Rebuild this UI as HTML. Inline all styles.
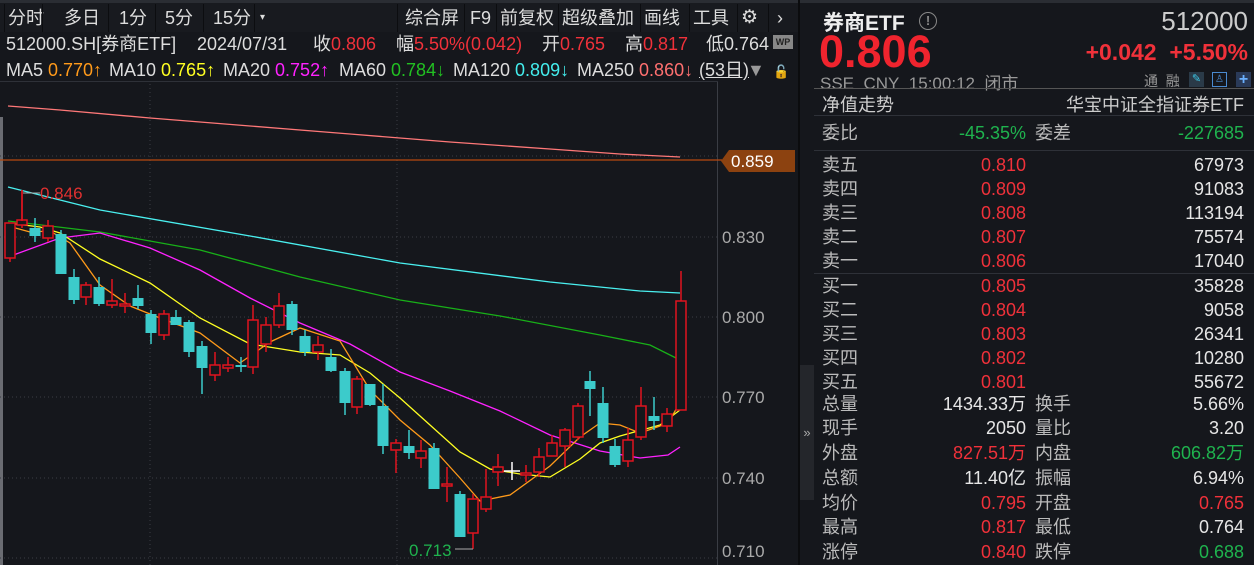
<!DOCTYPE html>
<html><head><meta charset="utf-8"><style>
*{margin:0;padding:0;box-sizing:border-box}
body{width:1254px;height:565px;background:#15171c;overflow:hidden;font-family:"Liberation Sans","Noto Sans CJK SC",sans-serif;color:#ccc;position:relative}
.a{position:absolute;white-space:nowrap}
.tb{position:absolute;top:4px;height:28px;font-size:18px;color:#ddd;line-height:28px}
.r{color:#f0313a}.g{color:#1fb34e}.w{color:#e6e6e6}
.row{position:absolute;left:822px;width:422px;height:24px;font-size:18px;line-height:24px}
.row span{position:absolute}
.l1{left:0;color:#bbb}.v1{right:218px}.l2{left:213px;color:#bbb}.v2{right:0}
.il{position:absolute;top:32px;font-size:18px;line-height:24px;color:#ddd;white-space:nowrap}
.ml{position:absolute;top:58px;font-size:18px;line-height:24px;color:#ddd;white-space:nowrap}
</style></head><body>
<div class="a" style="left:0;top:0;width:1254px;height:3px;background:#2a2d33"></div>
<div class="a" style="left:0;top:3px;width:798px;height:29px;background:#181a1f"></div>
<div class="tb" style="left:8px">分时</div>
<div class="tb" style="left:64px">多日</div>
<div class="tb" style="left:119px">1分</div>
<div class="tb" style="left:165px">5分</div>
<div class="tb" style="left:213px">15分</div>
<div class="tb" style="left:260px;font-size:10px">▾</div>
<div class="tb" style="left:405px">综合屏</div>
<div class="tb" style="left:470px">F9</div>
<div class="tb" style="left:500px">前复权</div>
<div class="tb" style="left:562px">超级叠加</div>
<div class="tb" style="left:644px">画线</div>
<div class="tb" style="left:693px">工具</div>
<div class="tb" style="left:741px;font-size:19px">⚙</div>
<div class="tb" style="left:777px">›</div>
<svg class="a" style="left:0;top:0" width="800" height="32">
<g stroke="#0c0d10" stroke-width="1">
<line x1="4.5" y1="4" x2="4.5" y2="32"/><line x1="42.5" y1="4" x2="42.5" y2="32"/><line x1="108.5" y1="4" x2="108.5" y2="32"/><line x1="155.5" y1="4" x2="155.5" y2="32"/><line x1="203.5" y1="4" x2="203.5" y2="32"/><line x1="254.5" y1="4" x2="254.5" y2="32"/>
<line x1="397.5" y1="4" x2="397.5" y2="32"/><line x1="464.5" y1="4" x2="464.5" y2="32"/><line x1="496.5" y1="4" x2="496.5" y2="32"/><line x1="558.5" y1="4" x2="558.5" y2="32"/><line x1="640.5" y1="4" x2="640.5" y2="32"/><line x1="689.5" y1="4" x2="689.5" y2="32"/><line x1="737.5" y1="4" x2="737.5" y2="32"/><line x1="768.5" y1="4" x2="768.5" y2="32"/></g></svg>
<span class="il" style="left:6px">512000.SH[券商ETF]</span>
<span class="il" style="left:197px">2024/07/31</span>
<span class="il" style="left:313px">收<span class="r">0.806</span></span>
<span class="il" style="left:396px">幅<span class="r">5.50%(0.042)</span></span>
<span class="il" style="left:542px">开<span class="r">0.765</span></span>
<span class="il" style="left:625px">高<span class="r">0.817</span></span>
<span class="il" style="left:706px">低0.764</span>
<div class="a" style="left:773px;top:35px;width:20px;height:14px;background:#888;color:#222;font-size:9px;font-weight:bold;text-align:center;line-height:14px">WP</div>
<span class="ml" style="left:6px">MA5 <span style="color:#ff9a1a">0.770↑</span></span>
<span class="ml" style="left:109px">MA10 <span style="color:#ffff22">0.765↑</span></span>
<span class="ml" style="left:223px">MA20 <span style="color:#ff22ff">0.752↑</span></span>
<span class="ml" style="left:339px">MA60 <span style="color:#22c022">0.784↓</span></span>
<span class="ml" style="left:453px">MA120 <span style="color:#44eeee">0.809↓</span></span>
<span class="ml" style="left:577px">MA250 <span style="color:#ff7070">0.860↓</span></span>
<span class="ml" style="left:699px;text-decoration:underline">(53日)</span>
<span class="ml" style="left:747px;color:#999">▼</span>
<span class="ml" style="left:773px;color:#e0a020;font-size:13px;top:60px">🔓</span>
<svg class="a" style="left:0;top:80px" width="800" height="485" viewBox="0 80 800 485">
<line x1="0" y1="81.5" x2="718" y2="81.5" stroke="#2e3138"/>
<rect x="0" y="117" width="3" height="448" fill="#6a6c72"/>
<g stroke="#3a3d44" stroke-dasharray="1,3" fill="none">
<line x1="0" y1="156" x2="718" y2="156"/><line x1="0" y1="237" x2="718" y2="237"/><line x1="0" y1="317" x2="718" y2="317"/><line x1="0" y1="397" x2="718" y2="397"/><line x1="0" y1="478" x2="718" y2="478"/><line x1="0" y1="558" x2="718" y2="558"/>
<line x1="150" y1="84" x2="150" y2="565"/><line x1="397" y1="84" x2="397" y2="565"/>
</g>
<line x1="717.5" y1="82" x2="717.5" y2="565" stroke="#3a3d44"/>
<line x1="0" y1="160" x2="722" y2="160" stroke="#b84a10" stroke-width="1.3"/>
<path d="M721,161 L729,150 H795 V172 H729 Z" fill="#8c4210"/>
<text x="731" y="167" fill="#fff" font-size="17" font-family="Liberation Sans">0.859</text>
<g fill="#aaa" font-size="17" font-family="Liberation Sans">
<text x="722" y="243">0.830</text><text x="722" y="323">0.800</text><text x="722" y="403">0.770</text><text x="722" y="484">0.740</text><text x="722" y="557">0.710</text></g>
<g fill="none" stroke-width="1.3">
<polyline stroke="#ff7878" points="8,106 60,110 150,118 250,126 350,134 450,142 550,149 620,154 680,157"/>
<polyline stroke="#4af0f0" points="8,187 100,210 250,236 400,263 550,282 640,291 680,293"/>
<polyline stroke="#18b018" points="8,221 100,232 200,250 300,277 400,300 500,316 600,335 650,345 680,360"/>
<polyline stroke="#ff22ff" points="8,257 60,238 100,233 150,248 200,270 250,298 300,323 350,344 400,372 450,391 500,411 550,435 600,451 640,458 668,455 680,447"/>
<polyline stroke="#ffff22" points="8,223 40,227 60,233 100,259 150,283 200,318 250,344 300,352 340,355 370,373 400,398 430,425 460,452 490,469 520,474 550,477 580,459 600,443 620,436 660,425 680,410"/>
<polyline stroke="#ff9a1a" points="8,226 30,232 50,231 70,243 100,285 130,306 160,318 200,333 240,363 270,342 300,328 340,341 370,390 400,420 430,445 460,478 480,501 510,495 550,466 580,437 600,423 620,425 640,433 660,426 670,420 683,397"/>
</g>
<g id="c" stroke-width="1.5"></g>
<line x1="22" y1="190" x2="22" y2="221" stroke="#e0141e" stroke-width="1.5"/>
<line x1="23" y1="193" x2="40" y2="193" stroke="#aaa"/><text x="40" y="199" fill="#e03030" font-size="17" font-family="Liberation Sans">0.846</text>
<text x="409" y="556" fill="#1fb34e" font-size="17" font-family="Liberation Sans">0.713</text><line x1="455" y1="549" x2="473" y2="549" stroke="#aaa"/>
<line x1="512" y1="462" x2="512" y2="480" stroke="#fff" stroke-width="1.5"/><line x1="504" y1="471" x2="520" y2="471" stroke="#fff" stroke-width="1.5"/>
</svg>
<script>
var d=[[10,'r',223,258,223,262],[22,'r',220,225,190,228],[35,'c',228,236,218,242],[48,'r',226,238,220,242],[61,'c',234,274,230,274],[74,'c',277,300,269,304],[86,'r',285,297,282,305],[99,'c',287,304,277,306],[112,'r',301,305,279,308],[125,'r',304,306,293,313],[138,'c',298,306,285,309],[151,'c',314,333,310,344],[164,'r',314,335,310,340],[176,'c',317,325,310,325],[189,'c',322,352,320,357],[202,'c',346,368,341,394],[215,'r',365,375,352,381],[228,'r',365,368,357,372],[241,'c',365,367,357,372],[253,'r',320,367,305,374],[266,'r',325,344,317,352],[279,'r',306,325,293,328],[292,'c',304,330,301,335],[305,'c',336,352,330,356],[318,'r',345,352,336,360],[331,'c',357,371,349,372],[345,'c',371,403,368,415],[357,'r',379,407,376,414],[370,'c',384,405,384,406],[383,'c',406,446,384,454],[396,'r',443,450,439,473],[409,'c',446,453,430,459],[421,'r',451,458,440,468],[434,'c',448,489,443,489],[447,'r',484,486,467,502],[460,'c',494,537,491,537],[473,'r',499,533,494,549],[486,'r',497,509,469,512],[498,'r',467,472,454,486],[526,'r',473,474,465,482],[539,'r',457,472,448,477],[552,'r',443,456,435,456],[565,'r',430,446,428,467],[578,'r',406,437,403,440],[590,'c',381,389,371,416],[603,'c',403,438,387,443],[615,'c',446,465,439,467],[628,'r',440,461,428,467],[641,'r',406,437,387,440],[654,'c',416,421,397,430],[667,'r',414,426,408,432],[681,'r',301,410,271,410]];
var s='';d.forEach(function(k){var x=k[0],col=k[1]=='r'?'#e0141e':'#3ccbcb';
s+='<line x1="'+x+'" y1="'+k[4]+'" x2="'+x+'" y2="'+k[5]+'" stroke="'+col+'"/>';
var h=Math.max(k[3]-k[2],2);
if(k[1]=='r')s+='<rect x="'+(x-5)+'" y="'+k[2]+'" width="10" height="'+h+'" fill="#15171c" stroke="'+col+'"/>';
else s+='<rect x="'+(x-5.5)+'" y="'+k[2]+'" width="11" height="'+h+'" fill="'+col+'" stroke="none"/>';});
document.getElementById('c').innerHTML=s;
</script>
<div class="a" style="left:798px;top:0;width:2px;height:565px;background:#0b0c0e"></div>
<div class="a" style="left:800px;top:365px;width:14px;height:135px;background:#24262b;color:#aaa;font-size:13px;line-height:135px;text-align:center">»</div>
<div class="a" style="left:823px;top:7px;font-size:21px;font-weight:bold;color:#eee">券商ETF</div>
<div class="a" style="left:919px;top:12px;width:18px;height:18px;border:1.5px solid #888;border-radius:50%;color:#888;font-size:13px;font-weight:bold;text-align:center;line-height:15px">!</div>
<div class="a" style="right:6px;top:6px;font-size:26px;color:#ccc">512000</div>
<div class="a" style="left:819px;top:26px;font-size:45px;font-weight:bold;color:#f0242e">0.806</div>
<div class="a r" style="right:6px;top:39px;font-size:23px;font-weight:bold">+0.042&nbsp; +5.50%</div>
<div class="a" style="left:820px;top:69px;font-size:17px;color:#999">SSE&nbsp; CNY&nbsp; 15:00:12&nbsp; 闭市</div>
<div class="a" style="left:1144px;top:71px;font-size:14px;color:#999">通&nbsp; 融</div>
<div class="a" style="left:1189px;top:72px;width:15px;height:15px;background:#2a3a48;color:#3cc8e8;font-size:11px;text-align:center;line-height:15px">✎</div>
<div class="a" style="left:1212px;top:72px;width:15px;height:15px;border:1px solid #4a8ad0;color:#4a8ad0;font-size:10px;text-align:center;line-height:13px">♙</div>
<div class="a" style="left:1236px;top:72px;width:15px;height:15px;background:#2a3a58;color:#6ab0ff;font-size:16px;font-weight:bold;text-align:center;line-height:15px">+</div>
<div class="a" style="left:814px;top:88px;width:440px;height:1px;background:#555"></div>
<div class="a" style="left:822px;top:91px;font-size:18px;color:#ccc">净值走势</div>
<div class="a" style="right:10px;top:91px;font-size:18px;color:#ccc">华宝中证全指证券ETF</div>
<div class="a" style="left:814px;top:115px;width:440px;height:1px;background:#2e3138"></div>
<div class="row" style="top:121px"><span class="l1">委比</span><span class="v1 g">-45.35%</span><span class="l2">委差</span><span class="v2 g">-227685</span></div>
<div class="a" style="left:814px;top:150px;width:440px;height:1px;background:#2e3138"></div>
<div class="row" style="top:153px"><span class="l1">卖五</span><span class="v1 r">0.810</span><span class="v2 w">67973</span></div>
<div class="row" style="top:177px"><span class="l1">卖四</span><span class="v1 r">0.809</span><span class="v2 w">91083</span></div>
<div class="row" style="top:201px"><span class="l1">卖三</span><span class="v1 r">0.808</span><span class="v2 w">113194</span></div>
<div class="row" style="top:225px"><span class="l1">卖二</span><span class="v1 r">0.807</span><span class="v2 w">75574</span></div>
<div class="row" style="top:249px"><span class="l1">卖一</span><span class="v1 r">0.806</span><span class="v2 w">17040</span></div>
<div class="a" style="left:814px;top:273px;width:440px;height:1px;background:#2e3138"></div>
<div class="row" style="top:274px"><span class="l1">买一</span><span class="v1 r">0.805</span><span class="v2 w">35828</span></div>
<div class="row" style="top:298px"><span class="l1">买二</span><span class="v1 r">0.804</span><span class="v2 w">9058</span></div>
<div class="row" style="top:322px"><span class="l1">买三</span><span class="v1 r">0.803</span><span class="v2 w">26341</span></div>
<div class="row" style="top:346px"><span class="l1">买四</span><span class="v1 r">0.802</span><span class="v2 w">10280</span></div>
<div class="row" style="top:370px"><span class="l1">买五</span><span class="v1 r">0.801</span><span class="v2 w">55672</span></div>
<div class="row" style="top:392px"><span class="l1">总量</span><span class="v1 w">1434.33万</span><span class="l2">换手</span><span class="v2 w">5.66%</span></div>
<div class="row" style="top:416px"><span class="l1">现手</span><span class="v1 w">2050</span><span class="l2">量比</span><span class="v2 w">3.20</span></div>
<div class="row" style="top:441px"><span class="l1">外盘</span><span class="v1 r">827.51万</span><span class="l2">内盘</span><span class="v2 g">606.82万</span></div>
<div class="row" style="top:466px"><span class="l1">总额</span><span class="v1 w">11.40亿</span><span class="l2">振幅</span><span class="v2 w">6.94%</span></div>
<div class="row" style="top:491px"><span class="l1">均价</span><span class="v1 r">0.795</span><span class="l2">开盘</span><span class="v2 r">0.765</span></div>
<div class="row" style="top:515px"><span class="l1">最高</span><span class="v1 r">0.817</span><span class="l2">最低</span><span class="v2 w">0.764</span></div>
<div class="row" style="top:540px"><span class="l1">涨停</span><span class="v1 r">0.840</span><span class="l2">跌停</span><span class="v2 g">0.688</span></div>
</body></html>
